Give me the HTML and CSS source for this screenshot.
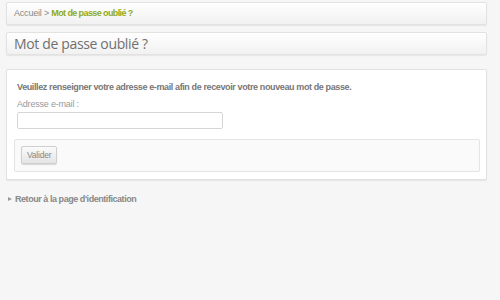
FILE: index.html
```html
<!DOCTYPE html>
<html>
<head>
    <title>Mot de passe oublié</title>
    <link rel="stylesheet" href="styles.css">
</head>
<body>
    <div id="page">
        <div class="box breadcrumb">
            <a href="#">Accueil</a> &gt; <strong>Mot de passe oublié ?</strong>
        </div>

        <div class="box title">
            <h1>Mot de passe oublié ?</h1>
        </div>

        <div class="box form-box">
            <p class="intro">Veuillez renseigner votre adresse e-mail afin de recevoir votre nouveau mot de passe.</p>
            <label for="email">Adresse e-mail :</label>
            <input type="text" id="email">
            <div class="actions">
                <button>Valider</button>
            </div>
        </div>

        <a class="back" href="#">Retour à la page d'identification</a>
    </div>
</body>
</html>
```

FILE: styles.css
```css
body {
    margin: 0;
    background-color: #f6f6f6;
    font-family: "Liberation Sans", Arial, sans-serif;
    font-size: 9px;
    letter-spacing: -0.2px;
    color: #888;
}

#page {
    width: 481px;
    margin-left: 6px;
    padding-top: 2px;
}

.box {
    border: 1px solid #e2e2e2;
    border-radius: 2px;
    background: linear-gradient(#ffffff, #f1f1f1);
    box-shadow: 0 1px 1px #e6e6e6;
}

.breadcrumb {
    height: 21px;
    line-height: 21px;
    padding-left: 7px;
}

.breadcrumb a {
    color: #888;
    text-decoration: none;
}

.breadcrumb strong {
    color: #8faa1b;
    letter-spacing: -0.6px;
}

.title {
    margin-top: 7px;
    height: 21px;
    padding-left: 7px;
}

.title h1 {
    margin: 0;
    font-family: "Open Sans", sans-serif;
    font-weight: normal;
    font-size: 14px;
    line-height: 21px;
    color: #707070;
    letter-spacing: -0.35px;
}

.form-box {
    margin-top: 14px;
    background: #fff;
    padding: 10px 6px 7px 7px;
}

.intro {
    margin: 0 0 0 3px;
    font-weight: bold;
    line-height: 14px;
    color: #777;
    letter-spacing: -0.38px;
}

label {
    display: block;
    margin: 3px 0 0 3px;
    line-height: 14px;
    color: #999;
}

input {
    display: block;
    margin: 1px 0 0 3px;
    width: 202px;
    height: 15px;
    padding: 0 1px;
    border: 1px solid #d6d6d6;
    border-radius: 2px;
}

.actions {
    margin-top: 10px;
    border: 1px solid #e4e4e4;
    border-radius: 2px;
    background: #fafafa;
    padding: 6px 6px 7px 6px;
}

button {
    font-family: "Liberation Sans", Arial, sans-serif;
    font-size: 8.5px;
    letter-spacing: -0.2px;
    color: #888;
    height: 18px;
    padding: 0 5px;
    border: 1px solid #cfcfcf;
    border-radius: 2px;
    background: linear-gradient(#fbfbfb, #e4e4e4);
    box-shadow: 0 1px 1px #d8d8d8;
}

.back {
    display: block;
    margin-top: 14px;
    padding-left: 9px;
    position: relative;
    font-weight: bold;
    color: #888;
    text-decoration: none;
    letter-spacing: -0.45px;
}

.back::before {
    content: "";
    position: absolute;
    left: 2px;
    top: 3px;
    border-left: 4px solid #999;
    border-top: 2.5px solid transparent;
    border-bottom: 2.5px solid transparent;
}
```
